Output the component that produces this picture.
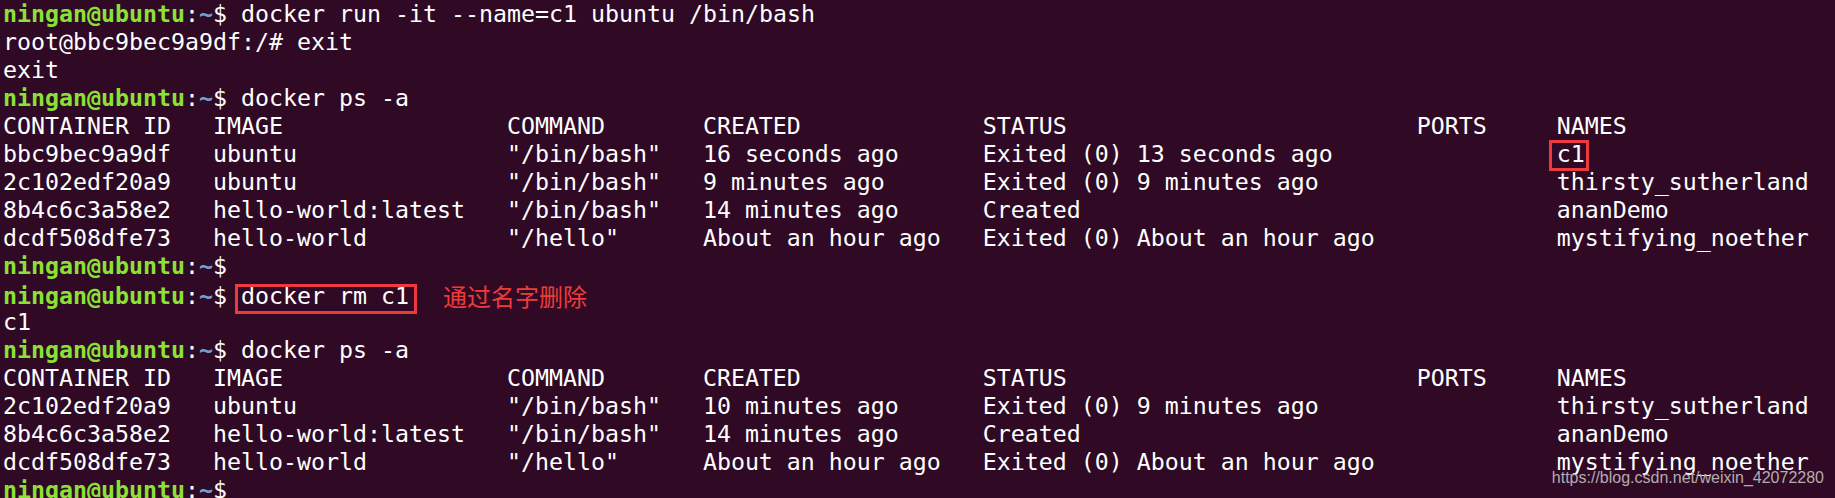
const cols = [0, 15, 36, 50, 70, 101, 111];

const row = (cells: string[]) => {
  let out = "";
  cells.forEach((c, i) => {
    if (i > 0) out = out.padEnd(cols[i], " ");
    out += c;
  });
  return out;
};

const header = row(["CONTAINER ID", "IMAGE", "COMMAND", "CREATED", "STATUS", "PORTS", "NAMES"]);

const firstList = [
  ["bbc9bec9a9df", "ubuntu", '"/bin/bash"', "16 seconds ago", "Exited (0) 13 seconds ago", "", ""],
  ["2c102edf20a9", "ubuntu", '"/bin/bash"', "9 minutes ago", "Exited (0) 9 minutes ago", "", "thirsty_sutherland"],
  ["8b4c6c3a58e2", "hello-world:latest", '"/bin/bash"', "14 minutes ago", "Created", "", "ananDemo"],
  ["dcdf508dfe73", "hello-world", '"/hello"', "About an hour ago", "Exited (0) About an hour ago", "", "mystifying_noether"],
];

const secondList = [
  ["2c102edf20a9", "ubuntu", '"/bin/bash"', "10 minutes ago", "Exited (0) 9 minutes ago", "", "thirsty_sutherland"],
  ["8b4c6c3a58e2", "hello-world:latest", '"/bin/bash"', "14 minutes ago", "Created", "", "ananDemo"],
  ["dcdf508dfe73", "hello-world", '"/hello"', "About an hour ago", "Exited (0) About an hour ago", "", "mystifying_noether"],
];

const Line = ({ children }: { children?: React.ReactNode }) => (
  <div className="h-[28px] leading-[28px] whitespace-pre">{children}</div>
);

const Prompt = () => (
  <>
    <span className="font-bold text-[#8ae234]">ningan@ubuntu</span>
    <span>:</span>
    <span className="font-bold text-[#729fcf]">~</span>
    <span>$ </span>
  </>
);

export default function App() {
  return (
    <div
      className="relative w-[1835px] h-[498px] overflow-hidden bg-[#300a24] text-white pl-[3px] text-[23.25px]"
      style={{ fontFamily: '"DejaVu Sans Mono", monospace' }}
    >
      <Line>
        <Prompt />
        docker run -it --name=c1 ubuntu /bin/bash
      </Line>
      <Line>root@bbc9bec9a9df:/# exit</Line>
      <Line>exit</Line>
      <Line>
        <Prompt />
        docker ps -a
      </Line>
      <Line>{header}</Line>
      {/* first listing, c1 name boxed */}
      <Line>
        {row(firstList[0]).padEnd(111, " ")}
        <span className="relative inline-block h-[28px]">
          c1
          <span className="absolute -left-[8px] -right-[4px] top-0 h-[31px] border-[3px] border-[#ec3a3f]"></span>
        </span>
      </Line>
      {firstList.slice(1).map((r) => (
        <Line key={r[0]}>{row(r)}</Line>
      ))}
      <Line>
        <Prompt />
      </Line>
      <Line>
        <Prompt />
        <span className="relative inline-block h-[28px]">
          docker rm c1
          <span className="absolute -left-[6px] -right-[8px] top-[2px] h-[30px] border-[3px] border-[#ec3a3f]"></span>
        </span>
        <span
          className="relative top-[2px] ml-[34px] text-[24px] text-[#f03a3a]"
          style={{ fontFamily: '"Noto Sans CJK SC", sans-serif' }}
        >
          通过名字删除
        </span>
      </Line>
      <Line>c1</Line>
      <Line>
        <Prompt />
        docker ps -a
      </Line>
      <Line>{header}</Line>
      {secondList.map((r) => (
        <Line key={r[0]}>{row(r)}</Line>
      ))}
      <Line>
        <Prompt />
      </Line>

      {/* blog watermark */}
      <div
        className="absolute right-[11px] top-[467px] text-[16px] leading-[22px] text-[#b4acb2]"
        style={{ fontFamily: '"Liberation Sans", Arial, sans-serif' }}
      >
        https://blog.csdn.net/weixin_42072280
      </div>
    </div>
  );
}
